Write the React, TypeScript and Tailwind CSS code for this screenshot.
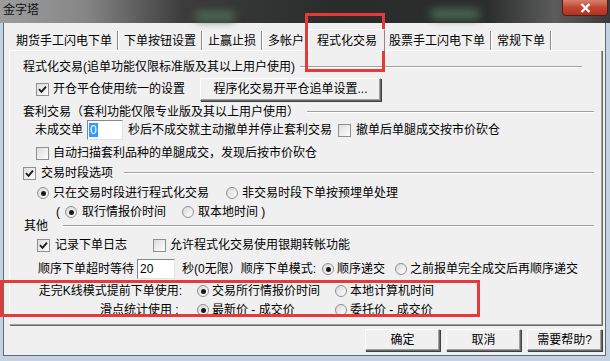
import React from 'react';

const Check: React.FC<{ checked?: boolean }> = ({ checked }) => (
  <span className="w-[13px] h-[13px] shrink-0 border border-[#8e8f8f] bg-gradient-to-br from-[#dcdcdc] to-white flex items-center justify-center">
    {checked && (
      <svg width="9" height="9" viewBox="0 0 9 9">
        <path d="M1 4.2 L3.5 6.8 L8 1.6" stroke="#1a1a1a" strokeWidth="1.9" fill="none" />
      </svg>
    )}
  </span>
);

const Radio: React.FC<{ checked?: boolean }> = ({ checked }) => (
  <span className="w-[12px] h-[12px] shrink-0 rounded-full border border-[#8e8f8f] bg-gradient-to-br from-[#d8d8d8] to-white flex items-center justify-center">
    {checked && <span className="w-[5px] h-[5px] rounded-full bg-[#1a1a1a]" />}
  </span>
);

const Etched: React.FC<{ className?: string }> = ({ className }) => (
  <div className={`h-[2px] border-t border-b border-[#a0a0a0] border-b-white ${className ?? ''}`} />
);

const Btn: React.FC<{ children: React.ReactNode; className?: string }> = ({ children, className }) => (
  <div
    className={`flex items-center justify-center bg-[#f0f0f0] border border-t-white border-l-white border-r-[#696969] border-b-[#696969] shadow-[inset_-1px_-1px_0_#a0a0a0,1px_1px_0_#404040] ${className ?? ''}`}
  >
    {children}
  </div>
);

const tabs = ['期货手工闪电下单', '下单按钮设置', '止赢止损', '多帐户', '程式化交易', '股票手工闪电下单', '常规下单'];

export default function App() {
  return (
    <div className="relative w-[610px] h-[361px] overflow-hidden bg-[#c4d3e2] flex flex-col text-[12px] leading-[18px] text-black font-['Liberation_Sans','Noto_Sans_CJK_SC',sans-serif]">
      {/* title bar */}
      <div className="relative h-[23px] shrink-0 flex items-start bg-[linear-gradient(90deg,#9c9c9c_0%,#868686_14%,#3c3c3c_30%,#2a2c2c_55%,#2c2e2e_80%,#5c5c5c_91%,#3a3a3a_100%)]">
        <div className="absolute left-[195px] top-[11px] w-[40px] h-[10px] rounded-full bg-[#4d6a58] blur-[4px]" />
        <div className="absolute left-[430px] top-[9px] w-[50px] h-[10px] rounded-full bg-[#4a6a56] blur-[4px]" />
        <span className="relative ml-[3px] pt-[1px] text-[#111]">金字塔</span>
        <div className="relative ml-auto mr-[2px] w-[46px] h-[16px] rounded-b-[4px] border border-t-0 border-[#5a1a14] bg-gradient-to-b from-[#d6806f] via-[#c2452f] to-[#b03420] flex items-center justify-center">
          <svg width="11" height="10" viewBox="0 0 11 10">
            <path d="M1.5 1 L9.5 9 M9.5 1 L1.5 9" stroke="white" strokeWidth="2.4" />
          </svg>
        </div>
      </div>

      <div className="flex flex-1 min-h-0 pl-[3px] pr-[4px] pb-[5px]">
        <div className="flex-1 flex flex-col bg-[#f0f0f0] border-l border-r border-b border-[#5f6b76] pl-[5px] pr-[3px]">
          {/* tabs */}
          <div className="flex items-end h-[19px] mt-[8px] pl-[1px]">
            {tabs.map((t, i) =>
              i === 4 ? (
                <div
                  key={t}
                  className="relative z-10 h-[22px] -mb-[1px] -mx-[2px] pl-[8px] pr-[7px] flex items-center bg-[#f0f0f0] border-t border-l border-r border-t-white border-l-white border-r-[#8a8a8a]"
                >
                  {t}
                </div>
              ) : (
                <div key={t} className="h-[19px] pl-[6px] pr-[5px] flex items-center border-r border-[#8a8a8a] shadow-[1px_0_0_white]">
                  {t}
                </div>
              )
            )}
          </div>

          {/* panel */}
          <div className="h-[275px] flex flex-col border border-t-white border-l-white border-r-[#a0a0a0] border-b-[#a0a0a0] shadow-[1px_1px_0_#696969]">
            <div className="h-[18px] mt-[7px] flex items-center pl-[13px]">
              <span>程式化交易(追单功能仅限标准版及其以上用户使用)</span>
              <Etched className="ml-[5px] w-[282px]" />
            </div>
            <div className="h-[18px] mt-[4px] flex items-center pl-[26px]">
              <Check checked />
              <span className="ml-[4px] w-[147px]">开仓平仓使用统一的设置</span>
              <Btn className="h-[23px] w-[181px]">程序化交易开平仓追单设置...</Btn>
            </div>
            <div className="h-[18px] mt-[5px] flex items-center pl-[13px]">
              <span>套利交易（套利功能仅限专业版及其以上用户使用）</span>
              <Etched className="ml-[8px] flex-1 mr-[7px]" />
            </div>
            <div className="h-[18px] mt-[0px] flex items-center pl-[25px]">
              <span>未成交单</span>
              <div className="ml-[4px] w-[36px] h-[20px] shrink-0 bg-white border border-t-[#828790] border-l-[#828790] border-r-[#e3e3e3] border-b-[#e3e3e3] flex items-center pl-[1px]">
                <span className="bg-[#3399ff] text-white leading-[14px] px-[1px]">0</span>
              </div>
              <span className="ml-[5px]">秒后不成交就主动撤单并停止套利交易</span>
              <span className="ml-[6px]"><Check /></span>
              <span className="ml-[5px]">撤单后单腿成交按市价砍仓</span>
            </div>
            <div className="h-[18px] mt-[5px] flex items-center pl-[26px]">
              <Check />
              <span className="ml-[4px]">自动扫描套利品种的单腿成交，发现后按市价砍仓</span>
            </div>
            <div className="h-[18px] mt-[2px] flex items-center pl-[13px]">
              <Check checked />
              <span className="ml-[5px]">交易时段选项</span>
              <Etched className="ml-[11px] flex-1 mr-[7px]" />
            </div>
            <div className="h-[18px] mt-[2px] flex items-center pl-[27px]">
              <Radio checked />
              <span className="ml-[4px] w-[173px]">只在交易时段进行程式化交易</span>
              <Radio />
              <span className="ml-[4px]">非交易时段下单按预埋单处理</span>
            </div>
            <div className="h-[18px] mt-[1px] flex items-center pl-[46px]">
              <span className="w-[9px]">(</span>
              <Radio checked />
              <span className="ml-[5px] w-[100px]">取行情报价时间</span>
              <Radio />
              <span className="ml-[4px]">取本地时间 )</span>
            </div>
            <div className="h-[18px] -mt-[4px] flex items-center pl-[14px]">
              <span>其他</span>
              <Etched className="ml-[15px] flex-1 mr-[7px]" />
            </div>
            <div className="h-[18px] mt-[1px] flex items-center pl-[27px]">
              <Check checked />
              <span className="ml-[5px] w-[98px]">记录下单日志</span>
              <Check />
              <span className="ml-[4px]">允许程式化交易使用银期转帐功能</span>
            </div>
            <div className="h-[18px] mt-[6px] flex items-center pl-[28px]">
              <span className="w-[99px] shrink-0">顺序下单超时等待</span>
              <div className="w-[38px] h-[20px] shrink-0 bg-white border border-t-[#828790] border-l-[#828790] border-r-[#e3e3e3] border-b-[#e3e3e3] flex items-center pl-[2px] leading-[14px]">
                20
              </div>
              <span className="ml-[7px] w-[140px] min-w-0 shrink-0 whitespace-nowrap overflow-visible">秒(0无限）顺序下单模式:</span>
              <Radio checked />
              <span className="ml-[3px] w-[58px] shrink-0">顺序递交</span>
              <Radio />
              <span className="ml-[3px] whitespace-nowrap">之前报单完全成交后再顺序递交</span>
            </div>
            <div className="h-[18px] mt-[4px] flex items-center pl-[27px]">
              <span className="w-[145px] shrink-0 text-right whitespace-nowrap">走完K线模式提前下单使用:</span>
              <span className="ml-[15px]"><Radio checked /></span>
              <span className="ml-[3px] w-[123px] shrink-0">交易所行情报价时间</span>
              <Radio />
              <span className="ml-[3px]">本地计算机时间</span>
            </div>
            <div className="h-[18px] mt-[1px] flex items-center pl-[27px]">
              <span className="w-[145px] shrink-0 text-right whitespace-pre">滑点统计使用 : </span>
              <span className="ml-[15px]"><Radio checked /></span>
              <span className="ml-[3px] w-[123px] shrink-0">最新价 - 成交价</span>
              <Radio />
              <span className="ml-[3px]">委托价 - 成交价</span>
            </div>
          </div>

          {/* buttons */}
          <div className="flex justify-end gap-[6px] mt-[4px]">
            <Btn className="w-[75px] h-[22px]">确定</Btn>
            <Btn className="w-[75px] h-[22px]">取消</Btn>
            <Btn className="w-[75px] h-[22px]">需要帮助?</Btn>
          </div>
        </div>
      </div>

      {/* red annotation boxes */}
      <div className="absolute left-[305px] top-[13px] w-[80px] h-[59px] border-[3px] border-[#e53a3a] pointer-events-none" />
      <div className="absolute left-0 top-[280px] w-[480px] h-[37px] border-[3px] border-[#e53a3a] pointer-events-none" />
    </div>
  );
}
